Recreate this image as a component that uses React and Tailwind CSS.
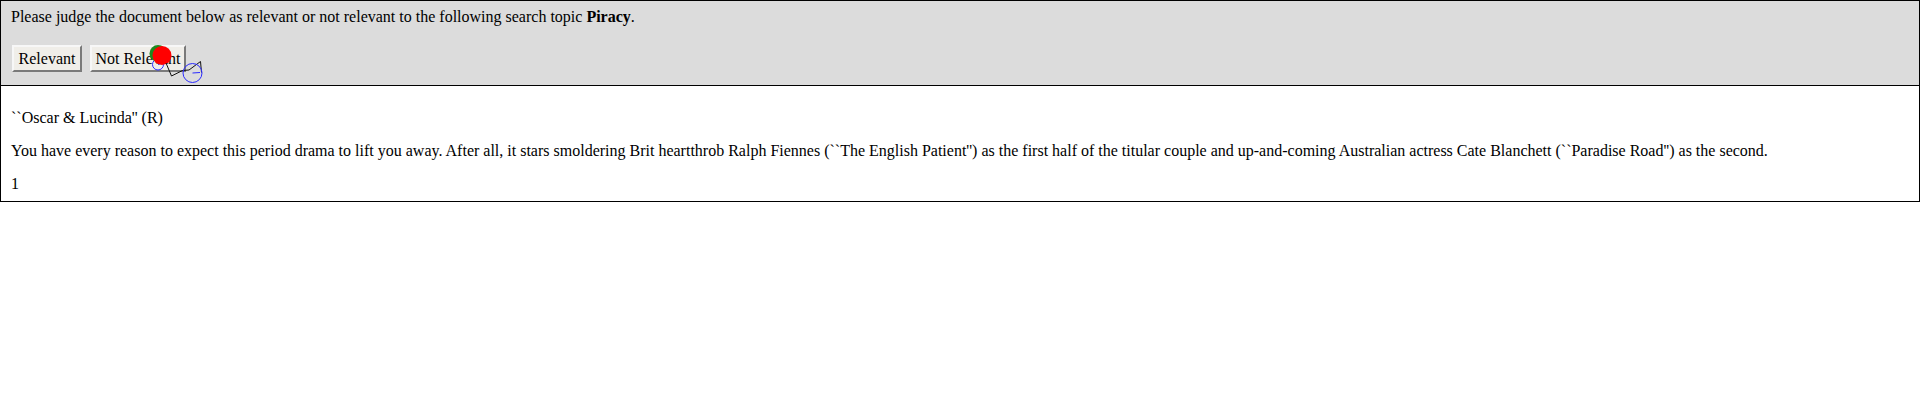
import React from "react";

function Overlay() {
  return (
    <svg
      className="pointer-events-none absolute left-0 top-0"
      width="240"
      height="90"
      viewBox="0 0 240 90"
    >
      <circle cx="158" cy="64.5" r="5.5" fill="none" stroke="#2b2bff" strokeWidth="1" />
      <line x1="158" y1="64.5" x2="163" y2="63" stroke="#2b2bff" strokeWidth="1" />
      <circle cx="158" cy="53.5" r="8.5" fill="#1f8a1f" />
      <circle cx="162" cy="55.5" r="9.5" fill="#ff0000" />
      <polyline
        points="166,63 171.5,76 182.5,70.5 189,70 200.5,61.5 201.5,72.5"
        fill="none"
        stroke="#111"
        strokeWidth="1"
        strokeLinejoin="round"
      />
      <circle cx="192.5" cy="73" r="9.5" fill="none" stroke="#2b2bff" strokeWidth="1" />
      <line x1="192.5" y1="73" x2="200" y2="72.5" stroke="#2b2bff" strokeWidth="1" />
    </svg>
  );
}

export default function App() {
  return (
    <div className="relative w-[1920px] font-['Liberation_Serif','Times_New_Roman',serif] text-[16px] text-black">
      <div className="h-[86px] border border-black bg-[#dcdcdc] pl-[10px] pt-[7px]">
        <p className="leading-[18px]">
          Please judge the document below as relevant or not relevant to the following search topic{" "}
          <b>Piracy</b>.
        </p>
        <div className="ml-[1px] mt-[19px] flex gap-[8px]">
          <button className="flex h-[27px] w-[70px] items-center justify-center border-2 border-t-[#f7f7f7] border-l-[#f7f7f7] border-b-[#7a7a7a] border-r-[#7a7a7a] bg-[#f0eee9] leading-[18px]">
            Relevant
          </button>
          <button className="flex h-[27px] w-[96px] items-center justify-center border-2 border-t-[#f7f7f7] border-l-[#f7f7f7] border-b-[#7a7a7a] border-r-[#7a7a7a] bg-[#f0eee9] leading-[18px]">
            Not Relevant
          </button>
        </div>
      </div>
      <div className="flex h-[116px] flex-col gap-[15px] border border-t-0 border-black bg-white pl-[10px] pt-[23px] leading-[18px]">
        <p>``Oscar &amp; Lucinda'' (R)</p>
        <p>
          You have every reason to expect this period drama to lift you away. After all, it stars smoldering Brit
          heartthrob Ralph Fiennes (``The English Patient'') as the first half of the titular couple and
          up-and-coming Australian actress Cate Blanchett (``Paradise Road'') as the second.
        </p>
        <p>1</p>
      </div>
      <Overlay />
    </div>
  );
}
